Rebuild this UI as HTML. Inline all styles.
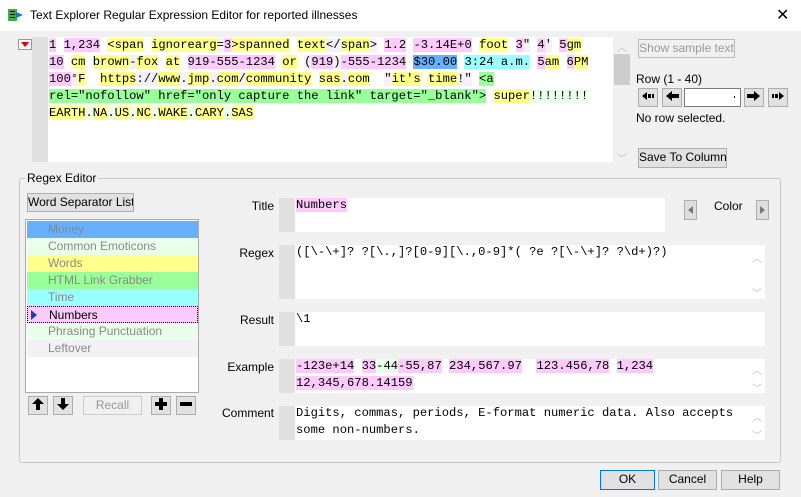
<!DOCTYPE html>
<html><head><meta charset="utf-8"><style>
*{margin:0;padding:0;box-sizing:border-box;white-space:nowrap}
body{width:801px;height:497px;background:#f0f0f0;font-family:"Liberation Sans",sans-serif;font-size:12px;color:#000;position:relative;overflow:hidden}
.a{position:absolute}
.mono{font-family:"Liberation Mono",monospace;font-size:12.15px;line-height:17px;white-space:pre}
.p{background:#fccbfc}.y{background:#ffff8c}.g{background:#99ff99}.c{background:#99ffff}.b{background:#66b0ff}.l{background:#eaffea}.v{background:#f4f0f8}
.btn{position:absolute;background:#e1e1e1;border:1px solid #adadad;text-align:center;font-size:12px;line-height:17px;overflow:hidden}
.gut{position:absolute;background:#e0e0e0}
.wh{position:absolute;background:#fff}
.lbl{position:absolute;text-align:right;width:80px}
.li{position:absolute;left:1px;width:171px;height:17px;line-height:17px;padding-left:21px;color:#888;font-size:12px}
.sb{position:absolute;color:#bbb;font-size:10px}
</style></head><body>
<div class="a" style="left:0;top:0;width:801px;height:31px;background:#fff"></div>
<svg class="a" style="left:8px;top:8px" width="16" height="14"><rect x="0" y="1" width="9" height="12" fill="#3cb043"/><rect x="2" y="3" width="5" height="1" fill="#000"/><rect x="2" y="6" width="5" height="1" fill="#000"/><rect x="2" y="9" width="5" height="1" fill="#000"/><path d="M8 4 L15 7 L8 10 Z" fill="#1e6ec8"/></svg>
<div class="a" style="left:30px;top:8px;font-size:12px">Text Explorer Regular Expression Editor for reported illnesses</div>
<div class="a" style="left:776px;top:5px;font-size:16px">✕</div>

<div class="a" style="left:18px;top:39px;width:14px;height:11px;border:1px solid #999;background:#f8f8f8"></div>
<svg class="a" style="left:21px;top:42px" width="8" height="5"><path d="M0 0 L8 0 L4 5Z" fill="#d00"/></svg>
<div class="gut" style="left:32px;top:37px;width:16px;height:125px"></div>
<div class="wh" style="left:48px;top:37px;width:565px;height:125px"></div>
<div class="a" style="left:613px;top:37px;width:17px;height:125px;background:#f0f0f0"></div>
<div class="a" style="left:614px;top:54px;width:16px;height:31px;background:#cdcdcd"></div>
<div class="sb" style="left:617px;top:39px">︿</div><div class="sb" style="left:617px;top:150px">﹀</div>
<div class="a mono" style="left:49px;top:37px"><span class="p">1</span> <span class="p">1,234</span> <span class="y">&lt;span</span> <span class="y">ignorearg</span><span class="v">=</span><span class="p">3</span><span class="y">&gt;spanned</span> <span class="y">text</span><span class="v">&lt;/</span><span class="y">span</span><span class="v">&gt;</span> <span class="p">1.2</span> <span class="p">-3.14E+0</span> <span class="y">foot</span> <span class="p">3</span><span class="v">"</span> <span class="p">4</span><span class="v">'</span> <span class="p">5</span><span class="y">gm</span>
<span class="p">10</span> <span class="y">cm</span> <span class="y">brown</span><span class="v">-</span><span class="y">fox</span> <span class="y">at</span> <span class="p">919-555-1234</span> <span class="y">or</span> <span class="v">(</span><span class="p">919</span><span class="v">)</span><span class="p">-555-1234</span> <span class="b">$30.00</span> <span class="c">3:24 a.m.</span> <span class="p">5</span><span class="y">am</span> <span class="p">6</span><span class="y">PM</span>
<span class="p">100</span><span class="v">°</span><span class="y">F</span>  <span class="y">https</span><span class="v">://</span><span class="y">www</span><span class="v">.</span><span class="y">jmp</span><span class="v">.</span><span class="y">com</span><span class="v">/</span><span class="y">community</span> <span class="y">sas</span><span class="v">.</span><span class="y">com</span>  <span class="v">"</span><span class="y">it's</span> <span class="y">time</span><span class="v">!"</span> <span class="g">&lt;a</span>
<span class="g">rel="nofollow" href="only capture the link" target="_blank"&gt;</span> <span class="y">super</span><span class="l">!!!!!!!!</span>
<span class="y">EARTH</span><span class="l">.</span><span class="y">NA</span><span class="l">.</span><span class="y">US</span><span class="l">.</span><span class="y">NC</span><span class="l">.</span><span class="y">WAKE</span><span class="l">.</span><span class="y">CARY</span><span class="l">.</span><span class="y">SAS</span></div>

<div class="btn" style="left:638px;top:39px;width:97px;height:19px;color:#999;background:#f0f0f0;border-color:#bbb">Show sample text</div>
<div class="a" style="left:636px;top:72px;font-size:12px">Row (1 - 40)</div>
<div class="btn" style="left:638px;top:88px;width:20px;height:19px"><svg width="16" height="14"><path d="M2 7 L7 3 L7 11Z M8 5h3v4h-3z M12 5h2v4h-2z" fill="#000"/></svg></div>
<div class="btn" style="left:662px;top:88px;width:20px;height:19px"><svg width="16" height="14"><path d="M2 7 L8 2 L8 5 L15 5 L15 9 L8 9 L8 12Z" fill="#000"/></svg></div>
<div class="a" style="left:684px;top:88px;width:57px;height:19px;background:#fff;border:1px solid #7a7a7a"></div>
<div class="a" style="left:734px;top:96px;width:1px;height:2px;background:#000"></div>
<div class="btn" style="left:744px;top:88px;width:20px;height:19px"><svg width="16" height="14"><path d="M14 7 L8 2 L8 5 L1 5 L1 9 L8 9 L8 12Z" fill="#000"/></svg></div>
<div class="btn" style="left:768px;top:88px;width:20px;height:19px"><svg width="16" height="14"><path d="M14 7 L9 3 L9 11Z M5 5h3v4h-3z M2 5h2v4h-2z" fill="#000"/></svg></div>
<div class="a" style="left:636px;top:111px;font-size:12px">No row selected.</div>
<div class="btn" style="left:638px;top:148px;width:89px;height:20px">Save To Column</div>

<div class="a" style="left:19px;top:178px;width:762px;height:285px;border:1px solid #c8c8c8;border-radius:3px"></div>
<div class="a" style="left:25px;top:171px;background:#f0f0f0;padding:0 2px">Regex Editor</div>
<div class="btn" style="left:27px;top:193px;width:107px;height:19px">Word Separator List</div>
<div class="a" style="left:25px;top:219px;width:174px;height:174px;background:#fff;border:1px solid #aaa">
<div class="li b" style="top:1px;color:#7a8a9a">Money</div>
<div class="li l" style="top:18px">Common Emoticons</div>
<div class="li y" style="top:35px">Words</div>
<div class="li g" style="top:52px">HTML Link Grabber</div>
<div class="li c" style="top:69px">Time</div>
<div class="li p" style="top:86px;color:#000;border:1px dotted #000">Numbers</div>
<svg class="a" style="left:5px;top:90px" width="6" height="10"><path d="M0 0L6 5L0 10Z" fill="#1040c0"/></svg>
<div class="li l" style="top:103px">Phrasing Punctuation</div>
<div class="li v" style="top:120px">Leftover</div>
</div>
<div class="btn" style="left:28px;top:396px;width:20px;height:19px"><svg width="14" height="14"><path d="M7 1L13 7L9 7L9 13L5 13L5 7L1 7Z" fill="#000"/></svg></div>
<div class="btn" style="left:53px;top:396px;width:20px;height:19px"><svg width="14" height="14"><path d="M7 13L13 7L9 7L9 1L5 1L5 7L1 7Z" fill="#000"/></svg></div>
<div class="btn" style="left:83px;top:396px;width:59px;height:19px;color:#999;background:#f0f0f0;border-color:#ccc">Recall</div>
<div class="btn" style="left:151px;top:396px;width:20px;height:19px"><svg width="14" height="14"><path d="M5 1h4v4h4v4h-4v4h-4v-4h-4v-4h4z" fill="#000"/></svg></div>
<div class="btn" style="left:176px;top:396px;width:20px;height:19px"><svg width="14" height="14"><path d="M1 5h12v4h-12z" fill="#000"/></svg></div>

<div class="lbl" style="left:194px;top:199px">Title</div>
<div class="lbl" style="left:194px;top:246px">Regex</div>
<div class="lbl" style="left:194px;top:313px">Result</div>
<div class="lbl" style="left:194px;top:360px">Example</div>
<div class="lbl" style="left:194px;top:406px">Comment</div>

<div class="gut" style="left:279px;top:198px;width:16px;height:34px"></div>
<div class="wh" style="left:295px;top:198px;width:370px;height:34px"></div>
<div class="a mono" style="left:296px;top:197px"><span class="p">Numbers</span></div>
<div class="btn" style="left:684px;top:200px;width:13px;height:20px;background:#ddd"><svg width="11" height="18"><path d="M8 5L3 9L8 13Z" fill="#777"/></svg></div>
<div class="a" style="left:714px;top:199px">Color</div>
<div class="btn" style="left:756px;top:200px;width:13px;height:20px;background:#ddd"><svg width="11" height="18"><path d="M3 5L8 9L3 13Z" fill="#777"/></svg></div>

<div class="gut" style="left:279px;top:245px;width:16px;height:54px"></div>
<div class="wh" style="left:295px;top:245px;width:470px;height:54px"></div>
<div class="sb" style="left:752px;top:250px">︿</div><div class="sb" style="left:752px;top:285px">﹀</div>
<div class="a mono" style="left:296px;top:244px">([\-\+]? ?[\.,]?[0-9][\.,0-9]*( ?e ?[\-\+]? ?\d+)?)</div>

<div class="gut" style="left:279px;top:312px;width:16px;height:34px"></div>
<div class="wh" style="left:295px;top:312px;width:470px;height:34px"></div>
<div class="a mono" style="left:296px;top:311px">\1</div>

<div class="gut" style="left:279px;top:359px;width:16px;height:34px"></div>
<div class="wh" style="left:295px;top:359px;width:470px;height:34px"></div>
<div class="sb" style="left:752px;top:362px">︿</div><div class="sb" style="left:752px;top:380px">﹀</div>
<div class="a mono" style="left:296px;top:358px"><span class="p">-123e+14</span> <span class="p">33</span><span class="l">-44</span><span class="p">-55,87</span> <span class="p">234,567.97</span>  <span class="p">123.456,78</span> <span class="p">1,234</span>
<span class="p">12,345,678.14159</span></div>

<div class="gut" style="left:279px;top:406px;width:16px;height:34px"></div>
<div class="wh" style="left:295px;top:406px;width:470px;height:34px"></div>
<div class="sb" style="left:752px;top:409px">︿</div><div class="sb" style="left:752px;top:427px">﹀</div>
<div class="a mono" style="left:296px;top:405px">Digits, commas, periods, E-format numeric data. Also accepts
some non-numbers.</div>

<div class="btn" style="left:600px;top:470px;width:55px;height:20px;border:1px solid #0078d7">OK</div>
<div class="btn" style="left:658px;top:470px;width:59px;height:20px">Cancel</div>
<div class="btn" style="left:721px;top:470px;width:59px;height:20px">Help</div>
</body></html>
